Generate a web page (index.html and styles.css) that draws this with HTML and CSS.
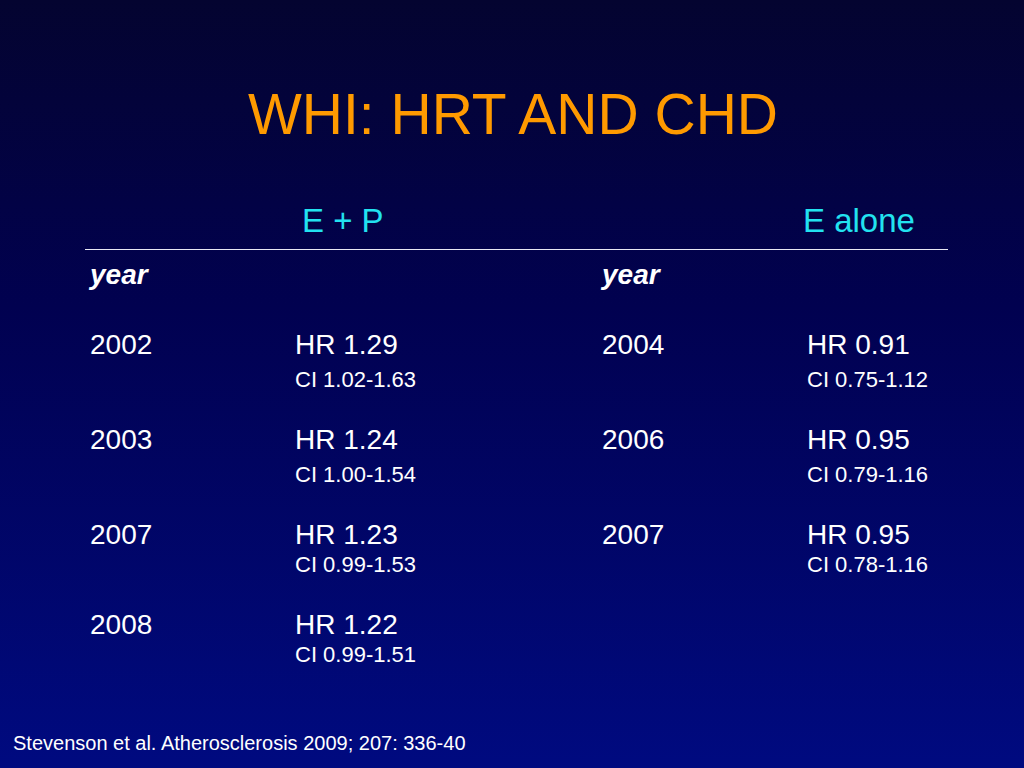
FILE: index.html
```html
<!DOCTYPE html>
<html lang="en">
<head>
<meta charset="utf-8">
<title>WHI: HRT AND CHD</title>
<link rel="stylesheet" href="styles.css">
</head>
<body>
<div class="slide">
  <h1 class="title">WHI: HRT AND CHD</h1>
  <div class="groups">
    <span>E + P</span>
    <span>E alone</span>
  </div>
  <div class="rule"></div>
  <div class="table">
    <div class="row head">
      <span class="year-label">year</span>
      <span></span>
      <span class="year-label">year</span>
      <span></span>
    </div>
    <div class="row first">
      <span class="yr">2002</span>
      <div class="stat"><span class="hr">HR 1.29</span><span class="ci">CI 1.02-1.63</span></div>
      <span class="yr">2004</span>
      <div class="stat"><span class="hr">HR 0.91</span><span class="ci">CI 0.75-1.12</span></div>
    </div>
    <div class="row">
      <span class="yr">2003</span>
      <div class="stat"><span class="hr">HR 1.24</span><span class="ci">CI 1.00-1.54</span></div>
      <span class="yr">2006</span>
      <div class="stat"><span class="hr">HR 0.95</span><span class="ci">CI 0.79-1.16</span></div>
    </div>
    <div class="row tight">
      <span class="yr">2007</span>
      <div class="stat"><span class="hr">HR 1.23</span><span class="ci">CI 0.99-1.53</span></div>
      <span class="yr">2007</span>
      <div class="stat"><span class="hr">HR 0.95</span><span class="ci">CI 0.78-1.16</span></div>
    </div>
    <div class="row tight">
      <span class="yr">2008</span>
      <div class="stat"><span class="hr">HR 1.22</span><span class="ci">CI 0.99-1.51</span></div>
      <span></span>
      <span></span>
    </div>
  </div>
  <p class="footer">Stevenson et al. Atherosclerosis 2009; 207: 336-40</p>
</div>
</body>
</html>
```

FILE: styles.css
```css
* { box-sizing: border-box; }
html, body {
  margin: 0;
  padding: 0;
}
body {
  font-family: "Liberation Sans", Arial, sans-serif;
  color: #ffffff;
}
.slide {
  width: 1024px;
  height: 768px;
  display: flex;
  flex-direction: column;
  background: linear-gradient(to bottom, #040430 0%, #010150 40%, #000a80 100%);
  overflow: hidden;
}
.title {
  margin: 84px 0 0 0;
  height: 60px;
  font-size: 57px;
  line-height: 60px;
  font-weight: normal;
  color: #ff9a00;
  text-align: center;
  padding-left: 2px;
}
.groups {
  margin-top: 60px;
  height: 33px;
  padding-left: 302px;
  display: grid;
  grid-template-columns: 501px auto;
  font-size: 33px;
  line-height: 33px;
  color: #22e2f0;
}
.rule {
  margin: 12px 0 0 85px;
  width: 863px;
  height: 1px;
  background: #e8e8f4;
}
.table {
  margin-top: 11px;
  padding-left: 90px;
  display: flex;
  flex-direction: column;
  gap: 35px;
}
.row {
  display: grid;
  grid-template-columns: 205px 307px 205px auto;
  font-size: 28px;
  line-height: 28px;
}
.row.first { margin-top: 7px; }
.year-label {
  font-weight: bold;
  font-style: italic;
}
.stat {
  display: flex;
  flex-direction: column;
  gap: 10px;
}
.row.tight .stat { gap: 5px; }
.ci {
  font-size: 22px;
  line-height: 22px;
}
.footer {
  margin: auto 0 0 0;
  padding: 0 0 15px 13px;
  font-size: 20px;
  line-height: 20px;
}
```
